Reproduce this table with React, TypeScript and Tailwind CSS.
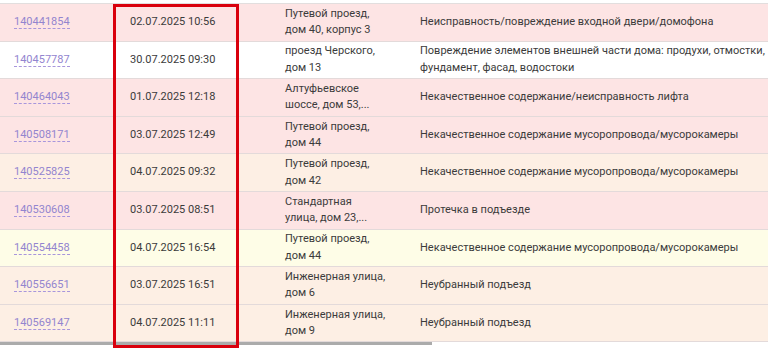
import React from 'react';

type Row = {
  id: string;
  date: string;
  address: [string, string?];
  text: [string, string?];
  tone: 'pink' | 'white' | 'peach' | 'yellow';
};

const rows: Row[] = [
  { id: '140441854', date: '02.07.2025 10:56', address: ['Путевой проезд,', 'дом 40, корпус 3'], text: ['Неисправность/повреждение входной двери/домофона'], tone: 'pink' },
  { id: '140457787', date: '30.07.2025 09:30', address: ['проезд Черского,', 'дом 13'], text: ['Повреждение элементов внешней части дома: продухи, отмостки,', 'фундамент, фасад, водостоки'], tone: 'white' },
  { id: '140464043', date: '01.07.2025 12:18', address: ['Алтуфьевское', 'шоссе, дом 53,...'], text: ['Некачественное содержание/неисправность лифта'], tone: 'pink' },
  { id: '140508171', date: '03.07.2025 12:49', address: ['Путевой проезд,', 'дом 44'], text: ['Некачественное содержание мусоропровода/мусорокамеры'], tone: 'pink' },
  { id: '140525825', date: '04.07.2025 09:32', address: ['Путевой проезд,', 'дом 42'], text: ['Некачественное содержание мусоропровода/мусорокамеры'], tone: 'peach' },
  { id: '140530608', date: '03.07.2025 08:51', address: ['Стандартная', 'улица, дом 23,...'], text: ['Протечка в подъезде'], tone: 'pink' },
  { id: '140554458', date: '04.07.2025 16:54', address: ['Путевой проезд,', 'дом 44'], text: ['Некачественное содержание мусоропровода/мусорокамеры'], tone: 'yellow' },
  { id: '140556651', date: '03.07.2025 16:51', address: ['Инженерная улица,', 'дом 6'], text: ['Неубранный подъезд'], tone: 'peach' },
  { id: '140569147', date: '04.07.2025 11:11', address: ['Инженерная улица,', 'дом 9'], text: ['Неубранный подъезд'], tone: 'peach' },
];

const toneClass: Record<Row['tone'], string> = {
  pink: 'bg-[#fde4e4]',
  white: 'bg-white',
  peach: 'bg-[#fdefe4]',
  yellow: 'bg-[#fefde7]',
};

const App: React.FC = () => {
  return (
    <div className="relative w-[768px] h-[359px] overflow-hidden bg-white font-['Roboto',sans-serif] text-[11px] text-[#3b3b3b]">
      {/* Table */}
      <div className="pt-[3px]">
        <div className="border-t border-[#e2dede]">
          {rows.map((r) => (
            <div
              key={r.id}
              className={`grid grid-cols-[113px_126px_181px_1fr] items-center h-[37.6px] border-b border-[#e3dada] ${toneClass[r.tone]}`}
            >
              <div className="pl-[14px]">
                <span className="text-[#9385cf] border-b border-dashed border-[#a896dc] leading-[13px] inline-block">{r.id}</span>
              </div>
              <div className="pl-[17px] whitespace-nowrap">{r.date}</div>
              <div className="pl-[46px] leading-[16.5px] whitespace-nowrap">
                <div>{r.address[0]}</div>
                {r.address[1] && <div>{r.address[1]}</div>}
              </div>
              <div className="leading-[16.5px] whitespace-nowrap">
                <div>{r.text[0]}</div>
                {r.text[1] && <div>{r.text[1]}</div>}
              </div>
            </div>
          ))}
        </div>
        {/* Horizontal scroll thumb */}
        <div className="h-[3px] w-[432px] bg-[#ababab]"></div>
      </div>

      {/* Red highlight frame */}
      <div className="absolute left-[113px] top-[4px] w-[126px] h-[344px] border-[3px] border-[#d9000d] pointer-events-none"></div>
    </div>
  );
};

export default App;
